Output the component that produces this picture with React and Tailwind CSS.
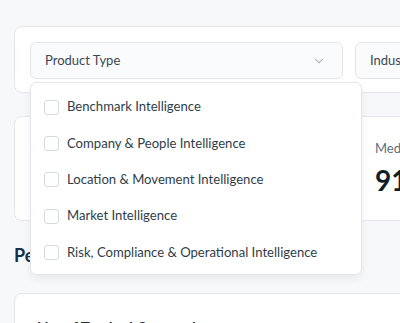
import { ChevronDown } from 'lucide-react'

const productTypes = [
  'Benchmark Intelligence',
  'Company & People Intelligence',
  'Location & Movement Intelligence',
  'Market Intelligence',
  'Risk, Compliance & Operational Intelligence',
]

export default function App() {
  return (
    <div
      className="min-h-screen overflow-hidden bg-[#f7f8fa] px-[14px] pt-[26px]"
      style={{ fontFamily: 'Lato, "Noto Sans", sans-serif' }}
    >
      {/* Filtres */}
      <div className="relative z-10 w-[760px] rounded-lg border border-[#e3e6ea] bg-white px-[15px] pt-[15px] pb-[13px]">
        <div className="flex gap-3">
          <div className="relative w-[313px]">
            <div className="flex h-[37px] items-center justify-between rounded-md border border-[#e3e6ea] bg-[#fafbfc] pl-[14px] pr-[16px] text-[13px] text-[#3b4853]">
              <span>Product Type</span>
              <ChevronDown className="h-[14px] w-[14px] text-[#9aa3ab]" strokeWidth={1.75} />
            </div>

            <div className="absolute left-0 top-[40px] w-[332px] rounded-md border border-[#e3e6ea] bg-white pt-[6px] pb-[4px] shadow-[0_4px_10px_rgba(0,0,0,0.06)]">
              {productTypes.map((p) => (
                <label key={p} className="flex h-[36.3px] items-center gap-[8px] px-[13px]">
                  <span className="h-[15px] w-[15px] rounded-[3px] border border-[#d5dae0] bg-white"></span>
                  <span className="text-[13.1px] text-[#2f3d47]">{p}</span>
                </label>
              ))}
            </div>
          </div>

          <div className="flex h-[37px] w-[313px] items-center justify-between rounded-md border border-[#e3e6ea] bg-[#fafbfc] pl-[14px] pr-[16px] text-[13px] text-[#3b4853]">
            <span>Industry</span>
            <ChevronDown className="h-[14px] w-[14px] text-[#9aa3ab]" strokeWidth={1.75} />
          </div>
        </div>
      </div>

      {/* Stats */}
      <div className="mt-[23px] h-[105px] w-[760px] rounded-lg border border-[#e3e6ea] bg-white px-[25px] pt-[21px]">
        <div className="grid grid-cols-[335px_335px]">
          <div>
            <p className="text-[13px] leading-5 text-[#5f6f7c]">Total Products</p>
            <p className="mt-[4px] text-[28px] font-bold leading-9 text-[#0f1d28]">248</p>
          </div>
          <div>
            <p className="text-[13px] leading-5 text-[#5f6f7c]">Median Score</p>
            <p className="mt-[4px] text-[28px] font-bold leading-9 text-[#0f1d28]">91.4</p>
          </div>
        </div>
      </div>

      <h2 className="mt-[21px] text-[18px] font-bold leading-[26px] text-[#16304a]">
        Performance Overview
      </h2>

      <div className="mt-[25px] w-[760px] rounded-lg border border-[#e3e6ea] bg-white px-[22px] pt-[22px] pb-6">
        <p className="text-[15px] font-bold text-[#1c2b36]">No. of Tracked Companies</p>
      </div>
    </div>
  )
}
